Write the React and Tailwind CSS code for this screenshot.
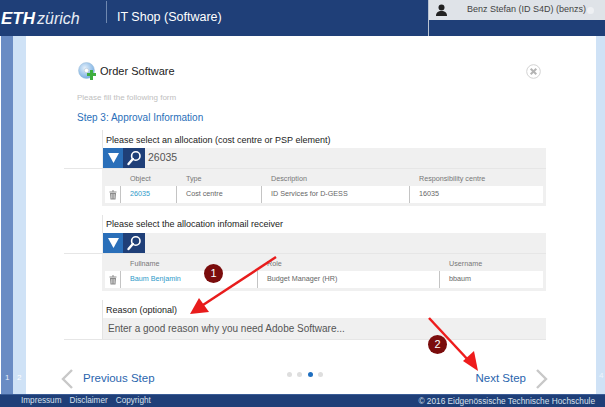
import React from "react";

const Trash = () => (
  <svg width="8" height="10" viewBox="0 0 8 10" fill="#8a8a8a"><rect x="0.5" y="1.5" width="7" height="1" /><rect x="3" y="0.5" width="2" height="1" /><path d="M1 3h6l-.5 6.500h-5z" /><path d="M2.600 4v4.500M4 4v4.500M5.400 4v4.500" stroke="#fff" strokeWidth=".5" /></svg>
);

const Magnifier = () => (
  <svg width="16" height="16" viewBox="0 0 16 16" fill="none" stroke="#fff"><circle cx="9.800" cy="6" r="4.200" strokeWidth="1.600" /><path d="M6.800 9L2.500 14" strokeWidth="2.400" strokeLinecap="round" /></svg>
);

const SearchBar = ({ value }) => (
  <div className="flex h-[20px] items-center bg-[#f0f0f0] pl-[1px]">
    <div className="flex h-[20px] w-[20px] items-center justify-center bg-[#2a6fb9]">
      <svg width="11" height="10" viewBox="0 0 11 10"><path d="M0 0h11L5.500 10z" fill="#fff" /></svg>
    </div>
    <div className="flex h-[20px] w-[22px] items-center justify-center bg-[#1f3f78]"><Magnifier /></div>
    <span className="ml-[3px] text-[10.500px] text-[#555]">{value}</span>
  </div>
);

const Divider = () => <div className="h-[17px] w-[1px] shrink-0 bg-[#c4c4c4]" />;

const Table = ({ cols, cells }) => (
  <div className="h-[37px] bg-[#f0f0f0] px-[3px]">
    <div className="flex h-[17px] items-center pt-[4px] text-[7.200px] text-[#777]">
      <div className="w-[15px] shrink-0" />
      {cols.map((c) => (
        <div key={c.t} className="shrink-0 pl-[10px]" style={{ width: c.w }}>{c.t}</div>
      ))}
    </div>
    <div className="flex h-[17px] items-center bg-white text-[7.200px] text-[#666]">
      <div className="flex w-[15px] shrink-0 justify-center"><Trash /></div>
      {cols.map((c, i) => (
        <React.Fragment key={c.t}>
          <Divider />
          <div className={"shrink-0 pl-[9px] " + (i === 0 ? "text-[#2e9ac9]" : "")} style={{ width: c.w - 1 }}>{cells[i]}</div>
        </React.Fragment>
      ))}
    </div>
  </div>
);

const Chevron = ({ flip }) => (
  <svg width="12" height="20" viewBox="0 0 12 20" fill="none" className={flip ? "-scale-x-100" : ""}>
    <path d="M11 1L2 10l9 9" stroke="#c8c8c8" strokeWidth="2.400" />
  </svg>
);

const Dot = ({ on }) => <div className={"h-[5px] w-[5px] rounded-full " + (on ? "bg-[#1f6fc0]" : "bg-[#dedede]")} />;

export default function App() {
  return (
    <div className="relative flex h-[407px] w-[605px] flex-col overflow-hidden bg-white font-['Liberation_Sans',Arial,sans-serif]">
      {/* header */}
      <header className="flex h-[36px] shrink-0 bg-[#1f3f78] text-white">
        <div className="flex h-[36px] w-[106px] items-center pl-[1px] pt-[1px] italic leading-none">
          <span className="text-[17px] font-bold">ETH</span>
          <span className="ml-[2px] text-[16px] text-[#e8edf5]">zürich</span>
        </div>
        <div className="mt-[1px] h-[22px] w-[1px] bg-[#6f88b0]" />
        <div className="ml-[10px] pt-[9px] text-[12.500px] leading-[17px]">IT Shop (Software)</div>
        <div className="ml-auto w-[177px] border-l border-[#b9c3d2]">
          <div className="flex h-[20px] items-center bg-[#dfe3e8] text-[#444]">
            <svg width="11" height="12" viewBox="0 0 11 12" className="ml-[7px] shrink-0" fill="#222"><circle cx="5.500" cy="3.500" r="3" /><path d="M0 12c0-3.500 2-5 5.500-5s5.500 1.500 5.500 5z" /></svg>
            <span className="ml-[20px] whitespace-nowrap text-[9px]">Benz Stefan (ID S4D) (benzs)</span>
            <div className="ml-[1px] h-[7px] w-[7px] shrink-0 rounded-full bg-[#eef0f3]" />
          </div>
        </div>
      </header>

      <div className="flex min-h-0 flex-1">
        <div className="w-[1px] bg-white" />
        <div className="relative w-[12px] bg-[#6a8cc4]"><span className="absolute bottom-[10px] left-[4px] text-[8px] text-[#e6eefa]">1</span></div>
        <div className="relative w-[13px] bg-[#cfe2f6]"><span className="absolute bottom-[10px] left-[4px] text-[8px] text-white">2</span></div>

        <main className="flex w-[570px] flex-col pl-[38px]">
          <div className="mt-[26px] flex h-[18px] w-[477px] items-center pl-[14px]">
            <svg width="18" height="18" viewBox="0 0 18 18" className="shrink-0">
              <defs><radialGradient id="cd" cx=".4" cy=".35" r=".8"><stop offset="0" stopColor="#e4f0fb" /><stop offset="1" stopColor="#5f9fdc" /></radialGradient></defs>
              <circle cx="8.500" cy="8.500" r="8" fill="url(#cd)" stroke="#9dbcd8" strokeWidth=".5" />
              <circle cx="8.500" cy="8.500" r="2.200" fill="#fff" stroke="#a8b8c8" strokeWidth=".5" />
              <path d="M12 8h3v3h3v3h-3v4h-3v-4H9v-3h3z" fill="#3fae3f" />
            </svg>
            <span className="ml-[4px] whitespace-nowrap text-[11px] text-[#222]">Order Software</span>
            <svg width="15" height="15" viewBox="0 0 15 15" className="ml-auto shrink-0" fill="none">
              <circle cx="7.500" cy="7.500" r="6.800" stroke="#d2d2d2" />
              <path d="M4.700 4.700l5.600 5.600M10.300 4.700l-5.600 5.600" stroke="#b4b4b4" strokeWidth="2" />
            </svg>
          </div>

          <div className="mt-[13px] pl-[13px] text-[8px] leading-[10px] text-[#c0c0c0]">Please fill the following form</div>
          <div className="mt-[8px] pl-[13px] text-[10px] leading-[13px] text-[#2a6fb9]">Step 3: Approval Information</div>

          <section className="mt-[6px] flex flex-col">
            <div className="ml-[38px] w-[444px]">
              <div className="h-[18px] border-l border-[#e4e4e4] pl-[3px] pt-[3px] text-[9px] leading-[14px] text-[#222]">Please select an allocation (cost centre or PSP element)</div>
              <SearchBar value="26035" />
            </div>
            <div className="h-[1px] w-[482px] bg-[#e6e6e6]" />
            <div className="ml-[38px] w-[444px]">
              <Table
                cols={[
                  { t: "Object", w: 56 },
                  { t: "Type", w: 85 },
                  { t: "Description", w: 148 },
                  { t: "Responsibility centre", w: 133 },
                ]}
                cells={["26035", "Cost centre", "ID Services for D-GESS", "16035"]}
              />
            </div>
          </section>

          <section className="mt-[9px] flex flex-col">
            <div className="ml-[38px] w-[444px]">
              <div className="h-[18px] border-l border-[#e4e4e4] pl-[3px] pt-[2px] text-[9px] leading-[14px] text-[#222]">Please select the allocation infomail receiver</div>
              <SearchBar />
            </div>
            <div className="h-[1px] w-[482px] bg-[#e6e6e6]" />
            <div className="ml-[38px] w-[444px]">
              <Table
                cols={[
                  { t: "Fullname", w: 137 },
                  { t: "Role", w: 182 },
                  { t: "Username", w: 103 },
                ]}
                cells={["Baum Benjamin", "Budget Manager (HR)", "bbaum"]}
              />
            </div>
          </section>

          <section className="mt-[9px] flex flex-col">
            <div className="ml-[38px] w-[444px]">
              <div className="h-[18px] border-l border-[#e4e4e4] pl-[3px] pt-[3px] text-[9px] leading-[14px] text-[#222]">Reason (optional)</div>
              <div className="flex h-[21px] items-center border-l border-[#e4e4e4] bg-[#f0f0f0] pb-[1px] pl-[5px] text-[10px] text-[#555]">Enter a good reason why you need Adobe Software...</div>
            </div>
            <div className="h-[1px] w-[482px] bg-[#e6e6e6]" />
          </section>

          <nav className="ml-[-3px] mt-[27px] flex h-[24px] w-[487px] items-center">
            <Chevron />
            <span className="ml-[10px] text-[11.500px] text-[#2a65ae]">Previous Step</span>
            <div className="mb-[9px] ml-[132px] flex gap-[5.500px]"><Dot /><Dot /><Dot on /><Dot /></div>
            <span className="ml-auto text-[11.500px] text-[#2a65ae]">Next Step</span>
            <div className="ml-[10px]"><Chevron flip /></div>
          </nav>
        </main>

        <div className="relative w-[9px] bg-[#cfe2f6]"><span className="absolute bottom-[12px] left-[3px] text-[8px] text-[#eef5fc]">4</span></div>
      </div>

      {/* footer */}
      <footer className="flex h-[13px] shrink-0 items-center border-t border-[#3a5c96] bg-[#1f3f78] pl-[21px] pr-[10px] text-[8.200px] text-[#d8e0ec]">
        <span>Impressum</span>
        <span className="ml-[8px]">Disclaimer</span>
        <span className="ml-[8px]">Copyright</span>
        <span className="ml-auto text-[8.300px]">© 2016 Eidgenössische Technische Hochschule</span>
      </footer>

      {/* callouts over the page */}
      <svg className="pointer-events-none absolute left-0 top-0" width="605" height="407">
        <path d="M276 257L203 305" stroke="#e81c1c" strokeWidth="2.500" />
        <path d="M190 314L199 298L209 312z" fill="#e81c1c" />
        <path d="M429 318L470 362" stroke="#ee1c1c" strokeWidth="2.500" />
        <path d="M478 371L463 361L474 351z" fill="#ee1c1c" />
      </svg>
      <div className="absolute left-[204px] top-[264px] flex h-[19px] w-[19px] items-center justify-center rounded-full bg-[#7a0c0c] text-[11px] text-white">1</div>
      <div className="absolute left-[428px] top-[335px] flex h-[19px] w-[19px] items-center justify-center rounded-full bg-[#7a0c0c] text-[11px] text-white">2</div>
    </div>
  );
}
